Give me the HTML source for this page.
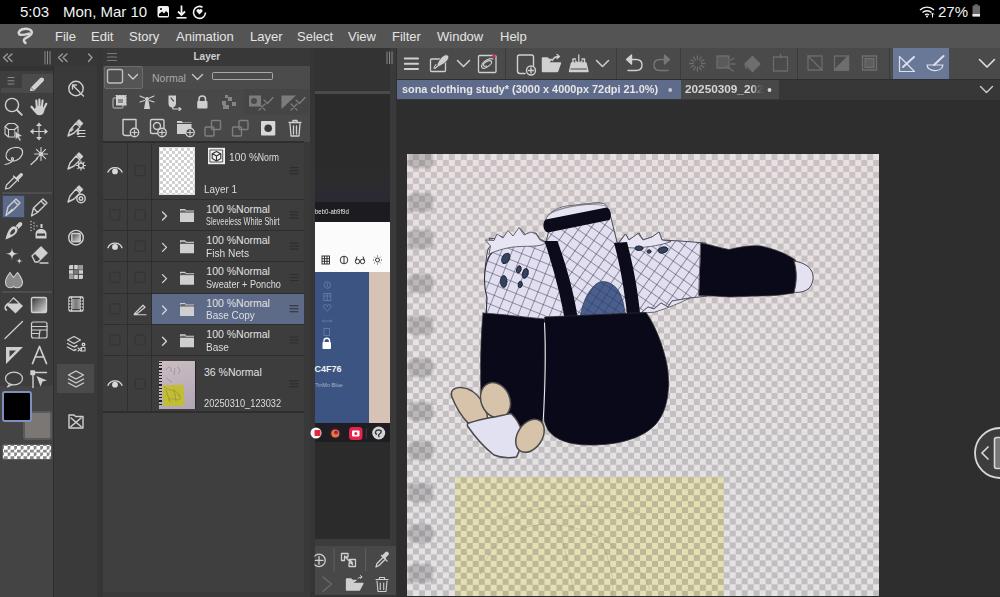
<!DOCTYPE html>
<html><head><meta charset="utf-8">
<style>
*{margin:0;padding:0;box-sizing:border-box}
html,body{width:1000px;height:597px;overflow:hidden;background:#2e2e2e;font-family:"Liberation Sans",sans-serif}
.a{position:absolute}
svg{position:absolute;overflow:visible}
.ic{fill:none;stroke:#cfcfcf;stroke-width:1.4;stroke-linecap:round;stroke-linejoin:round}
.icf{fill:#cfcfcf;stroke:none}
#status{left:0;top:0;width:1000px;height:24px;background:#000;color:#f2f2f2;font-size:15px}
#menu{left:0;top:24px;width:1000px;height:24px;background:#545454;color:#e4e4e4;font-size:13px}
#menu span{position:absolute;top:4.5px}
#tools{left:0;top:48px;width:54px;height:549px;background:#3d3d3d}
#sub{left:54px;top:48px;width:43px;height:549px;background:#3a3a3a}
#strip1{left:97px;top:48px;width:6px;height:549px;background:#353535}
#layer{left:103px;top:48px;width:207px;height:549px;background:#424242}
#mid{left:310px;top:48px;width:87px;height:549px;background:#363636}
#canvasarea{left:397px;top:48px;width:603px;height:549px;background:#2e2e2e}
#ctool{left:397px;top:48px;width:603px;height:32px;background:#474747}
#tabs{left:397px;top:80px;width:603px;height:20px;background:#383838}
#canvas{left:407px;top:154px;width:471px;height:443px;overflow:hidden;
 background-color:#e6dfdf;
 background-image:conic-gradient(#c9c2c2 0 25%,transparent 0 50%,#c9c2c2 0 75%,transparent 0);
 background-size:12px 12px}
.lt{color:#dedede;font-size:12px;position:absolute;white-space:nowrap;letter-spacing:-0.2px}
</style></head><body>
<!-- STATUS -->
<div id="status" class="a">
 <span class="a" style="left:20px;top:3px">5:03</span>
 <span class="a" style="left:63px;top:3px">Mon, Mar 10</span>
 <span class="a" style="left:938px;top:3px">27%</span>

 <svg style="left:0;top:0" width="1000" height="24">
  <rect x="157.5" y="6" width="11.5" height="11.5" rx="1.8" fill="#f2f2f2"/>
  <path d="M159 16 L159 14 L162 11.5 L164 13.5 L166 11 L168 13 L168 16 Z" fill="#000"/>
  <circle cx="161" cy="9" r="1" fill="#000"/>
  <path d="M181.5 5.5 V14.5 M178 11.5 L181.5 15 L185 11.5" stroke="#f2f2f2" stroke-width="1.8" fill="none"/>
  <rect x="176.5" y="17" width="10" height="1.6" fill="#f2f2f2"/>
  <path d="M202.5 7.2 A6 6 0 1 0 205.5 12.5" stroke="#f2f2f2" stroke-width="1.6" fill="none"/>
  <path d="M199.5 14.5 L196.8 11.8 A1.5 1.5 0 0 1 199.5 9.8 A1.5 1.5 0 0 1 202.2 11.8 Z" fill="#f2f2f2"/>
  <path d="M920 10 A10 10 0 0 1 934 10 M922.5 12.5 A6.5 6.5 0 0 1 931.5 12.5 M925 15 A3 3 0 0 1 929 15" stroke="#f2f2f2" stroke-width="1.4" fill="none"/>
  <circle cx="927" cy="16.5" r="1" fill="#f2f2f2"/>
  <path d="M932.5 17.5 V13 M931 14.5 L932.5 13 L934 14.5" stroke="#f2f2f2" stroke-width="1" fill="none"/>
  <rect x="972.5" y="5.5" width="7.5" height="11" rx="1" fill="#6a6a6a"/>
  <rect x="974.5" y="4.3" width="3.5" height="1.5" fill="#6a6a6a"/>
  <rect x="972.5" y="14" width="7.5" height="2.5" fill="#e8e8e8"/>
 </svg>
</div>
<!-- MENU -->
<div id="menu" class="a">
<svg style="left:0;top:0" width="60" height="24"><path d="M29 9.6 C25.5 10.6 21 11.6 19.2 10.2 C17.8 8.8 19.5 6.2 22.5 5.3 C26.5 4.2 31.5 5 31.8 8.3 C32 11 28.5 12.6 25.5 14.2 C23.5 15.3 23.2 17 25.5 19" stroke="#d6d6d6" stroke-width="2.5" fill="none" stroke-linecap="round" stroke-linejoin="round"/></svg>
<span style="left:55px">File</span><span style="left:91px">Edit</span><span style="left:129px">Story</span><span style="left:176px">Animation</span><span style="left:250px">Layer</span><span style="left:297px">Select</span><span style="left:348px">View</span><span style="left:392px">Filter</span><span style="left:437px">Window</span><span style="left:500px">Help</span>
</div>
<div id="tools" class="a"></div>
<div class="a" style="left:0;top:48px;width:54px;height:18px;background:#373737"></div>
<div class="a" style="left:0;top:66px;width:54px;height:6px;background:#333"></div>
<div class="a" style="left:1px;top:71px;width:52px;height:120px;background:#3e3e3e"></div>
<div class="a" style="left:22px;top:74px;width:31px;height:15px;background:#4b4b4b"></div>
<div class="a" style="left:1px;top:88px;width:52px;height:5px;background:#4a4a4a"></div>
<div class="a" style="left:2px;top:192px;width:50px;height:1.5px;background:#4e4e4e"></div>
<div class="a" style="left:2px;top:291px;width:50px;height:1.5px;background:#4e4e4e"></div>
<div class="a" style="left:2px;top:195px;width:23px;height:23px;background:#5c6a8a;border:1px solid #3a4660"></div>
<div class="a" style="left:0;top:386px;width:54px;height:211px;background:#444"></div>
<div class="a" style="left:53px;top:66px;width:1px;height:531px;background:#2e2e2e"></div>
<!-- color swatches -->
<div class="a" style="left:23px;top:411px;width:29px;height:29px;background:#7a7774;border:2px solid #5a5a5a;border-radius:3px"></div>
<div class="a" style="left:1.5px;top:391px;width:30px;height:31px;background:#000;border:2px solid #7f8fc0;border-radius:3px"></div>
<div class="a" style="left:2px;top:444px;width:50px;height:16px;border-radius:3px;border:1.5px solid #5a5a5a;background-color:#fff;background-image:conic-gradient(#888 0 25%,transparent 0 50%,#888 0 75%,transparent 0);background-size:6.5px 6.5px;background-position:1px 1px"></div>
<svg style="left:0;top:0" width="54" height="597">
 <g class="ic">
  <path d="M3.5 57.5 L7.5 54 M3.5 57.5 L7.5 61.5 M8 57.5 L12 54 M8 57.5 L12 61.5" stroke="#9a9a9a"/>
  <path d="M45 51.5 V64 M47.5 51.5 V64 M50 51.5 V64" stroke="#8a8a8a" stroke-width="1"/>
  <path d="M8 77.5 H14 M8 80.8 H14 M8 84 H14" stroke="#8a8a8a" stroke-width="1"/>
  <path d="M29.8 91 L30.8 87.5 L40 78.3 C41 77.3 42.7 77.3 43.5 78.3 C44.3 79.2 44.2 80.6 43.2 81.6 L34 90.8 Z" fill="#d0d0d0" stroke="none"/><path d="M31 87.5 L33.5 90" stroke="#4b4b4b" stroke-width="0.7"/>
  <!-- row1 magnifier -->
  <circle cx="12" cy="105" r="6.6"/><path d="M17 110 L21.8 114.8" stroke-width="1.8"/>
  <!-- hand -->
  <g stroke="#cfcfcf" stroke-linecap="round"><path d="M37 109 L36.3 100.5 M39.4 108.5 V99.5 M41.6 109 L42.6 100.5 M43.2 110 L46.3 103.8" stroke-width="2.1"/><path d="M35.5 111.5 L31.5 106.8" stroke-width="2.3"/></g><ellipse cx="39.5" cy="110.5" rx="4.8" ry="4.8" fill="#cfcfcf" stroke="none"/>
  <!-- cube cursor -->
  <path d="M5 126.5 L8.5 123.5 H14.5 L18 126.5 V134 L14.5 137 H8.5 L5 134 Z M5 126.5 L8.5 129.5 H14.5 L18 126.5 M8.5 129.5 V137 M14.5 129.5 V137" stroke-width="1.1"/>
  <path d="M15 131 L22.5 136 L19.3 136.8 L21.3 140.3 L19.6 141.2 L17.6 137.7 L15.5 139.8 Z" fill="#cfcfcf" stroke="#3e3e3e" stroke-width="0.6"/>
  <!-- move -->
  <path d="M39 125 V138.5 M32.5 131.5 H45.5" stroke-width="1.1"/><path d="M39 122.5 L42 126 H36 Z M39 140.5 L42 137 H36 Z M30 131.5 L33.5 128.5 V134.5 Z M48 131.5 L44.5 128.5 V134.5 Z" fill="#cfcfcf" stroke="none"/>
  <!-- lasso -->
  <path d="M11 161 C5 160 5 154 8 150.5 C11 147 18 146.5 21.5 149 C24 152 22 158 16 160.5 C14 161.5 12 160.5 11.5 159 C11 157.5 13.5 157 13.5 159 C13.5 161.5 9 164 5 164.5" stroke-width="1.2"/>
  <!-- magic wand -->
  <path d="M31 164.5 L37.5 158.5" stroke-width="1.2"/>
  <path d="M41 147.5 V160.5 M34.5 154 H47.5 M36.4 149.4 L45.6 158.6 M45.6 149.4 L36.4 158.6" stroke-width="1.1"/><circle cx="41" cy="154" r="2" fill="#cfcfcf" stroke="none"/>
  <!-- eyedropper -->
  <path d="M5.5 189 L6.5 185 L14.5 177 L17.5 180 L9.5 188 Z" stroke-width="1.2"/><path d="M13.5 176 L18.5 181 M16.3 178.3 L20.5 174 C21.5 173 23 174.5 22 175.5 L17.8 179.8" fill="#cfcfcf" stroke-width="1.3"/>
  <!-- pen selected -->
  <path d="M6 215.5 L8 207 L16 199 L20 203 L12 211 Z M8.5 213 L12 209.5 M14 201 L18 205"/>
  <!-- pencil -->
  <path d="M31.5 216 L33.5 208 L43 199 L47 203 L37.5 212.5 Z M33.5 208 L37.5 212.5 M41 201 L45 205" fill="none"/>
  <!-- brush -->
  <path d="M5.5 239.5 C6.5 235 8 230 11.5 227 C13.5 225.5 16.5 226.5 17.5 228.5 C18 231 16.5 234 13 236 C10.5 237.5 8 238.5 5.5 239.5Z" fill="#cfcfcf" stroke="none"/>
  <path d="M10 234 C10.5 231.5 12 229.5 14 229 C15.5 229.5 15.5 231.5 14 233 C12.5 234.5 11 235 10 234Z" fill="#3e3e3e" stroke="none"/>
  <path d="M16.5 226 L19.5 223 C20.5 222 22.5 223.5 21.5 225 L18.5 228" fill="#cfcfcf" stroke="#cfcfcf" stroke-width="1.2"/>
  <!-- airbrush -->
  <path d="M35.5 238.5 H46.5 V234 C46.5 230.5 44 229 41 229 C38 229 35.5 230.5 35.5 234 Z" fill="#cfcfcf" stroke="none"/>
  <rect x="37" y="233.5" width="8" height="2.3" fill="#3e3e3e" stroke="none"/>
  <rect x="40.5" y="224" width="2" height="4" fill="#cfcfcf" stroke="none"/>
  <g fill="#cfcfcf" stroke="none"><circle cx="31" cy="221.5" r="0.7"/><circle cx="31" cy="224.5" r="0.7"/><circle cx="31" cy="227.5" r="0.7"/><circle cx="31" cy="230.5" r="0.7"/><circle cx="34" cy="223" r="0.7"/><circle cx="34" cy="226" r="0.7"/><circle cx="34" cy="229" r="0.7"/><circle cx="37" cy="226" r="0.7"/></g>
  <!-- sparkle -->
  <path d="M12 247.5 C12.4 252 13 253.2 18.5 253.8 C13 254.4 12.4 255.6 12 260.5 C11.6 255.6 11 254.4 5.5 253.8 C11 253.2 11.6 252 12 247.5Z" fill="#d6d6d6" stroke="none"/>
  <path d="M19.3 257.5 C19.5 260 19.8 260.6 22.8 261 C19.8 261.4 19.5 262 19.3 264.5 C19.1 262 18.8 261.4 15.8 261 C18.8 260.6 19.1 260 19.3 257.5Z" fill="#d6d6d6" stroke="none"/>
  <!-- eraser -->
  <path d="M32 256 L41 247 L47 253 L38 262 L35 262 Z" />
  <path d="M34.5 253.5 L41 247 L47 253 L40.5 259.5Z" fill="#cfcfcf" stroke="none"/>
  <path d="M40 263 H48" />
  <!-- blend -->
  <path d="M5.5 282 C5.5 278.5 7.5 276 10 272.5 L13.5 277.5 L17.5 272.5 C20 276 22.5 279 22.5 282.5 C22.5 285.5 20 287.8 17 287.8 C15.5 287.8 14.3 287.2 13.5 286.3 C12.7 287.2 11.3 287.8 10 287.8 C7.5 287.8 5.5 285.5 5.5 282Z" fill="#8a8a8a" stroke="#cfcfcf" stroke-width="1.1"/>
  <!-- fill -->
  <path d="M13.5 297 L23 306 L15.5 313.5 L6.5 305 Z" fill="#cfcfcf" stroke="none"/>
  <path d="M13.5 298.8 L18.5 303.5 H8.8 Z" fill="#3e3e3e" stroke="none"/>
  <path d="M8 303.5 L6 305.5 C4.8 307 5 309.5 6.5 310" stroke-width="1.6"/>
  <!-- gradient -->
  <rect x="31.5" y="297.5" width="15" height="15" rx="1.5" fill="url(#grd)" stroke="#cfcfcf"/>
  <!-- line -->
  <path d="M5 338.5 L22.5 321.5" stroke-width="1.2"/>
  <!-- frame -->
  <rect x="31.5" y="322" width="15.5" height="16" rx="2" stroke-width="1.2"/><path d="M31.5 326.5 H47 M31.5 330 H47 M31.5 333.5 H38.5 M40 330 L39 338" stroke-width="1.2"/>
  <!-- ruler -->
  <path d="M6 347 H23 L6 364 Z" fill="#cfcfcf" stroke="none"/><path d="M9.5 350.5 H16 L9.5 357 Z" fill="#3e3e3e" stroke="none"/>
  <!-- A -->
  <path d="M32.5 363.5 L39.5 346.5 L46.5 363.5 M35 357 H44" stroke-width="1.7"/>
  <!-- balloon -->
  <ellipse cx="14" cy="378.5" rx="8.5" ry="6.3" stroke-width="1.2"/><path d="M9.5 384 L7.5 387 L12.5 384.5" stroke-width="1.2"/>
  <!-- correction line -->
  <path d="M33 372 V387.5 M33 372.5 H46.5" stroke-width="1.4"/><rect x="31" y="371" width="3.5" height="3.5" fill="#cfcfcf"/>
  <path d="M36.5 376 L47 380.5 L42.5 381.5 L40.5 386.5 Z" fill="#cfcfcf" stroke="none"/>
 </g>
 <defs><linearGradient id="grd" x1="0" y1="0" x2="1" y2="1"><stop offset="0" stop-color="#333"/><stop offset="1" stop-color="#ddd"/></linearGradient></defs>
</svg>
<div id="sub" class="a"></div>
<div class="a" style="left:54px;top:48px;width:43px;height:18px;background:#373737"></div>
<div class="a" style="left:57px;top:364px;width:37px;height:29px;background:#4a4a4a"></div>
<svg style="left:0;top:0" width="110" height="597">
 <g class="ic">
  <path d="M58.5 57.5 L62.5 54 M58.5 57.5 L62.5 61.5 M63 57.5 L67 54 M63 57.5 L67 61.5" stroke="#9a9a9a"/>
  <path d="M88.5 54 L92 57.5 L88.5 61.5" stroke="#9a9a9a"/>
  <!-- circle arrow -->
  <circle cx="76" cy="88.5" r="7.2"/><path d="M72.5 85 L79.5 92 M72.5 85 H76.5 M72.5 85 V89 M80 93 L83.5 96"/>
  <!-- pen lines -->
  <path d="M68 136 L70 130 L76 123 L80 127 L74 133 Z M71 131 L73 129" /><path d="M77 122 L79 120 L82.5 123.5 L80.5 125.5Z" fill="#cfcfcf"/>
  <path d="M78 130.5 H85 M78 133.5 H85 M78 136.5 H85" stroke-width="1.2"/><circle cx="78" cy="130.5" r="0.8" fill="#cfcfcf"/><circle cx="78" cy="133.5" r="0.8" fill="#cfcfcf"/>
  <!-- pen gear -->
  <path d="M68 169 L70 163 L76 156 L80 160 L74 166 Z" /><path d="M77 155 L79 153 L82.5 156.5 L80.5 158.5Z" fill="#cfcfcf"/>
  <circle cx="81" cy="165.5" r="2.5"/><path d="M81 161 V162.5 M81 168.5 V170 M76.5 165.5 H78 M84 165.5 H85.5 M77.8 162.3 L78.9 163.4 M83.1 167.6 L84.2 168.7 M84.2 162.3 L83.1 163.4 M78.9 167.6 L77.8 168.7" stroke-width="1.2"/>
  <!-- pen target -->
  <path d="M68 202 L70 196 L76 189 L80 193 L74 199 Z" /><path d="M77 188 L79 186 L82.5 189.5 L80.5 191.5Z" fill="#cfcfcf"/>
  <circle cx="81" cy="198.5" r="4.2"/><circle cx="81" cy="198.5" r="1.8"/>
  <!-- circle square -->
  <circle cx="76" cy="237.7" r="7.3"/><rect x="71.8" y="233.5" width="8.4" height="8.4" rx="1" fill="url(#grd2)"/>
  <!-- grid -->
  <rect x="69" y="265" width="14" height="14" rx="1.5" fill="#cfcfcf" stroke="none"/>
  <path d="M69 269.7 H83 M69 274.3 H83 M73.7 265 V279 M78.3 265 V279" stroke="#3a3a3a" stroke-width="1"/>
  <rect x="73.7" y="269.7" width="4.6" height="4.6" fill="#777" stroke="none"/><rect x="78.3" y="265" width="4.6" height="4.6" fill="#999" stroke="none"/><rect x="69" y="274.3" width="4.6" height="4.6" fill="#999" stroke="none"/>
  <!-- film -->
  <rect x="69" y="297" width="14" height="14" rx="1"/><path d="M71.5 297 V311 M80.5 297 V311" /><rect x="71.5" y="299" width="9" height="10" fill="url(#grd3)" stroke="none"/>
  <path d="M69.5 299.5 h1.5 M69.5 302.5 h1.5 M69.5 305.5 h1.5 M69.5 308.5 h1.5 M81 299.5 h1.5 M81 302.5 h1.5 M81 305.5 h1.5 M81 308.5 h1.5" stroke-width="1" stroke="#3a3a3a"/>
  <!-- layers x -->
  <path d="M67.5 340 L74 336.5 L80.5 340 L74 343.5 Z M67.5 343.5 L74 347 L77 345.5 M67.5 347 L74 350.5 L76 349.5" />
  <path d="M78 348 L81 351 M81 348 L78 351" stroke-width="1.1"/><circle cx="83.5" cy="344.5" r="1.3"/><rect x="81.5" y="347.5" width="3.5" height="3.5" stroke-width="1.1"/>
  <!-- layers selected -->
  <path d="M68.5 375 L76 371 L83.5 375 L76 379 Z M68.5 379 L76 383 L83.5 379 M68.5 383 L76 387 L83.5 383" />
  <!-- folder x -->
  <path d="M69 415 H74 L75.5 416.5 H83 V428 H69 Z" /><path d="M71 418 L81 426.5 M81 418 L71 426.5" stroke-width="1.6"/>
 </g>
 <defs>
  <linearGradient id="grd2" x1="0" y1="0" x2="1" y2="1"><stop offset="0" stop-color="#444"/><stop offset="1" stop-color="#ddd"/></linearGradient>
  <linearGradient id="grd3" x1="0" y1="0" x2="1" y2="0"><stop offset="0" stop-color="#aaa"/><stop offset="0.5" stop-color="#777"/><stop offset="1" stop-color="#aaa"/></linearGradient>
 </defs>
</svg>
<div id="strip1" class="a"></div>
<div class="a" style="left:103px;top:48px;width:207px;height:549px;background:#3a3a3a"></div>
<div class="a" style="left:103px;top:48px;width:207px;height:18px;background:#383838"></div>
<div class="a" style="left:103px;top:66px;width:207px;height:76px;background:#484848"></div>
<div class="a" style="left:143px;top:66px;width:167px;height:23px;background:#4b4b4b"></div>
<div class="a" style="left:244px;top:89px;width:65px;height:26px;background:#454545"></div>
<div class="a" style="left:104px;top:66px;width:39px;height:23px;background:#555;border:1.5px solid #6c6c6c;border-radius:2px"></div>
<div class="a" style="left:103px;top:142px;width:200.5px;height:271px;background:#3d3d3d"></div>
<div class="a" style="left:103px;top:413px;width:200.5px;height:179px;background:#3f3f3f"></div>
<div class="a" style="left:303.5px;top:142px;width:6.5px;height:450px;background:#393939"></div>
<div class="a" style="left:152px;top:293.5px;width:152px;height:30.5px;background:#5d6a88"></div>
<div class="a" style="left:103px;top:141.4px;width:200.5px;height:1.3px;background:#2e2e2e"></div>
<div class="a" style="left:103px;top:198.6px;width:200.5px;height:1.3px;background:#2e2e2e"></div>
<div class="a" style="left:103px;top:229.9px;width:200.5px;height:1.3px;background:#2e2e2e"></div>
<div class="a" style="left:103px;top:261.2px;width:200.5px;height:1.3px;background:#2e2e2e"></div>
<div class="a" style="left:103px;top:292.5px;width:200.5px;height:1.3px;background:#2e2e2e"></div>
<div class="a" style="left:103px;top:323.8px;width:200.5px;height:1.3px;background:#2e2e2e"></div>
<div class="a" style="left:103px;top:355.1px;width:200.5px;height:1.3px;background:#2e2e2e"></div>
<div class="a" style="left:103px;top:411.4px;width:200.5px;height:1.3px;background:#2e2e2e"></div>
<div class="a" style="left:127px;top:142px;width:1.2px;height:271px;background:#2f2f2f"></div>
<div class="a" style="left:151px;top:142px;width:1.2px;height:271px;background:#2e2e2e"></div>
<div class="a" style="left:193.5px;top:52.03px;font-size:10px;line-height:10px;color:#cfcfcf;white-space:nowrap;font-weight:bold;">Layer</div>

<div class="a" style="left:152px;top:72.61px;font-size:10.5px;line-height:10.5px;color:#a9a9a9;white-space:nowrap;font-weight:normal;">Normal</div>

<div class="a" style="left:212px;top:71.5px;width:61px;height:8.5px;border:1.3px solid #a8a8a8;border-radius:1.5px"></div>
<div class="a" style="left:159px;top:147px;width:36px;height:48px;background-color:#fff;background-image:conic-gradient(#d0d0d0 0 25%,transparent 0 50%,#d0d0d0 0 75%,transparent 0);background-size:6px 6px;border:1px solid #ddd"></div>
<div class="a" style="left:158.5px;top:360.5px;width:37px;height:48.5px;background:#262626"></div>
<div class="a" style="left:159px;top:361px;width:36px;height:47.5px;background:linear-gradient(165deg,#cbbcc2,#bdb0ba 55%,#b0a6b8)"></div>
<div class="a" style="left:162.5px;top:384.5px;width:21px;height:21px;background:#c2be34;transform:rotate(-2deg)"></div>
<div class="a" style="left:159px;top:362px;width:3px;height:45px;background:repeating-linear-gradient(#1e1e1e 0 1.3px,transparent 1.3px 3.2px)"></div>
<svg style="left:0;top:0" width="200" height="420"><g fill="none" stroke="#8a8088" stroke-width="0.6"><path d="M166 370 C168 366 172 366 171 372 M175 368 L174 375 M177 367 C180 368 181 372 178 374 M167 378 C169 381 172 381 171 383 M164 387 C170 392 175 388 180 396 M168 400 C172 396 176 402 180 399"/></g><g fill="none" stroke="#9a9420" stroke-width="0.8"><path d="M166 390 L170 402 M174 389 L176 401 M178 394 L181 399"/></g></svg>
<div class="a" style="left:229px;top:152.49px;font-size:11px;line-height:11px;color:#dcdcdc;white-space:nowrap;font-weight:normal;transform:scaleX(0.93);transform-origin:0 0;">100 %<span style="display:inline-block;transform:scaleX(0.85);transform-origin:0 0">Norm</span></div>

<div class="a" style="left:204px;top:184.16px;font-size:10.8px;line-height:10.8px;color:#dedede;white-space:nowrap;font-weight:normal;transform:scaleX(0.92);transform-origin:0 0;">Layer 1</div>

<div class="a" style="left:206.3px;top:203.71px;font-size:10.5px;line-height:10.5px;color:#e2e2e2;white-space:nowrap;font-weight:normal;">100 %Normal</div>

<div class="a" style="left:206px;top:216.31px;font-size:10.5px;line-height:10.5px;color:#dedede;white-space:nowrap;font-weight:normal;transform:scaleX(0.7);transform-origin:0 0;">Sleveeless White Shirt</div>

<div class="a" style="left:206.3px;top:235.01px;font-size:10.5px;line-height:10.5px;color:#e2e2e2;white-space:nowrap;font-weight:normal;">100 %Normal</div>

<div class="a" style="left:206px;top:247.61px;font-size:10.5px;line-height:10.5px;color:#dedede;white-space:nowrap;font-weight:normal;transform:scaleX(0.97);transform-origin:0 0;">Fish Nets</div>

<div class="a" style="left:206.3px;top:266.31px;font-size:10.5px;line-height:10.5px;color:#e2e2e2;white-space:nowrap;font-weight:normal;">100 %Normal</div>

<div class="a" style="left:206px;top:278.91px;font-size:10.5px;line-height:10.5px;color:#dedede;white-space:nowrap;font-weight:normal;transform:scaleX(0.87);transform-origin:0 0;">Sweater + Poncho</div>

<div class="a" style="left:206.3px;top:297.61px;font-size:10.5px;line-height:10.5px;color:#e2e2e2;white-space:nowrap;font-weight:normal;">100 %Normal</div>

<div class="a" style="left:206px;top:310.21px;font-size:10.5px;line-height:10.5px;color:#dedede;white-space:nowrap;font-weight:normal;transform:scaleX(0.95);transform-origin:0 0;">Base Copy</div>

<div class="a" style="left:206.3px;top:328.91px;font-size:10.5px;line-height:10.5px;color:#e2e2e2;white-space:nowrap;font-weight:normal;">100 %Normal</div>

<div class="a" style="left:206px;top:341.51px;font-size:10.5px;line-height:10.5px;color:#dedede;white-space:nowrap;font-weight:normal;transform:scaleX(0.96);transform-origin:0 0;">Base</div>

<div class="a" style="left:204px;top:366.91px;font-size:10.5px;line-height:10.5px;color:#e2e2e2;white-space:nowrap;font-weight:normal;">36 %Normal</div>

<div class="a" style="left:204px;top:398.11px;font-size:10.5px;line-height:10.5px;color:#dedede;white-space:nowrap;font-weight:normal;transform:scaleX(0.88);transform-origin:0 0;">20250310_123032</div>

<svg style="left:0;top:0" width="320" height="597"><g class="ic">
<path d="M107.5 53.5 H116.5 M107.5 57 H116.5 M107.5 60.5 H116.5" stroke="#7a7a7a" stroke-width="1.1"/>
<rect x="107.5" y="69.5" width="15" height="13.5" rx="2" stroke="#bdbdbd" stroke-width="1.4" fill="#4e4e4e"/>
<path d="M128.5 74.5 L133 79 L137.5 74.5" stroke="#cfcfcf" stroke-width="1.3"/>
<path d="M192.5 74.5 L197.5 79.5 L202.5 74.5" stroke="#c8c8c8" stroke-width="1.3"/>
<rect x="113" y="98" width="10" height="10" rx="1.5" stroke="#9a9a9a"/><rect x="116" y="95.5" width="10" height="10" fill="#cfcfcf" stroke="none"/><path d="M116 95.5 h10 v10" stroke="#cfcfcf" stroke-dasharray="1.5 1.5" stroke-width="1.2"/><rect x="118" y="99" width="5" height="4" fill="#888" stroke="none"/>
<path d="M144 109 L145.5 100.5 H148.5 L150 109 Z" fill="#cfcfcf" stroke="none"/><circle cx="147" cy="99" r="2" fill="#cfcfcf" stroke="none"/><path d="M140 96 L144.5 98 M154 96 L149.5 98 M140 102 L144.5 100.5 M154 102 L149.5 100.5" stroke-width="1.1"/>
<path d="M168.5 95.5 H176 V103.5 C176 106 174 107.5 172 107.5 C170 107.5 168.5 106 168.5 103.5 Z" fill="#cfcfcf" stroke="none"/><path d="M171 98 L173.5 101" stroke="#555" stroke-width="1.2"/><path d="M172.5 107 L173 109 H181 M179 107.5 L181 109 L179 110.5" stroke-width="1.1"/>
<path d="M199 101.5 V99 C199 95 205.5 95 205.5 99 V101.5" stroke-width="1.5"/><rect x="197.2" y="101" width="10.3" height="7.5" rx="1" fill="#cfcfcf" stroke="none"/>
<g opacity="0.45"><rect x="222" y="101" width="4" height="4" fill="#cfcfcf" stroke="none"/><rect x="228" y="97" width="4" height="4" fill="#cfcfcf" stroke="none"/><rect x="232" y="102" width="4" height="4" fill="#cfcfcf" stroke="none"/><rect x="223" y="105" width="6" height="4" fill="#cfcfcf" stroke="none"/><rect x="225" y="95" width="3" height="3" fill="#cfcfcf" stroke="none"/></g>
<g opacity="0.4"><rect x="249" y="95.5" width="12" height="11" fill="#cfcfcf" stroke="none"/><circle cx="254" cy="101" r="3" fill="#555" stroke="none"/><path d="M259 104 L265 110 M265 104 L259 110 M264 100 L267.5 103.5 L273 97.5" stroke-width="1.3"/></g>
<g opacity="0.4"><path d="M281.5 95.5 H296 L281.5 109 Z" fill="#cfcfcf" stroke="none"/><path d="M291 104 L297 110 M297 104 L291 110 M296 100 L299.5 103.5 L305 97.5" stroke-width="1.3"/></g>
<path d="M123 119.5 H136 V129 M123 119.5 V133.5 C123 135 124.5 135.5 126 135.5 H130" stroke-width="1.4"/><circle cx="134.5" cy="132.5" r="4.2" fill="#484848"/><path d="M134.5 130 V135 M132 132.5 H137" stroke-width="1.2"/>
<rect x="150.5" y="119.5" width="13.5" height="14" rx="1.5"/><circle cx="157" cy="126" r="3.5"/><circle cx="162" cy="132.5" r="4.2" fill="#484848"/><path d="M162 130 V135 M159.5 132.5 H164.5" stroke-width="1.2"/>
<path d="M177 121 H181.5 L183 122.5 H191.5 V134 H177 Z" fill="#cfcfcf" stroke="none"/><path d="M177 123.5 H191.5" stroke="#484848" stroke-width="1"/><circle cx="190" cy="132.5" r="4.2" fill="#484848"/><path d="M190 130 V135 M187.5 132.5 H192.5" stroke-width="1.2"/>
<g opacity="0.4"><rect x="211.5" y="120.5" width="9" height="9" rx="1"/><rect x="205" y="127" width="9" height="9" rx="1"/></g>
<g opacity="0.4"><rect x="239" y="120.5" width="9" height="9" rx="1"/><rect x="232.5" y="127" width="9" height="9" rx="1"/></g>
<rect x="261" y="121" width="14.3" height="14.5" rx="1" fill="#d8d8d8" stroke="none"/><circle cx="268.2" cy="128.2" r="3.8" fill="#3a3a3a" stroke="none"/>
<path d="M289 122.5 H301 M293 122.5 V120.5 H297 V122.5 M290 124 L291 136 H299 L300 124 M293.5 126 V134 M296.5 126 V134" stroke-width="1.3"/>
<path d="M108 172.1 C110.5 166.1 119.5 166.1 122 172.1" stroke="#d8d8d8" stroke-width="1.4" fill="none"/><circle cx="115" cy="171.4" r="2.9" fill="#d8d8d8" stroke="none"/>
<rect x="135" y="165.6" width="10" height="10" rx="1.5" stroke="#353535" stroke-width="1.3"/>
<path d="M290 167.6 H298 M290 170.6 H298 M290 173.6 H298" stroke="#2e2e2e" stroke-width="1.1"/>
<rect x="110" y="209.85" width="10" height="10" rx="1.5" stroke="#353535" stroke-width="1.3"/>
<rect x="135" y="209.85" width="10" height="10" rx="1.5" stroke="#353535" stroke-width="1.3"/>
<path d="M290 211.85 H298 M290 214.85 H298 M290 217.85 H298" stroke="#2e2e2e" stroke-width="1.1"/>
<path d="M162.5 212.04999999999998 L166.5 216.04999999999998 L162.5 220.04999999999998" stroke="#d8d8d8" stroke-width="1.3"/>
<path d="M180 209.04999999999998 H185 L186.5 210.54999999999998 H194 V222.04999999999998 H180 Z" fill="#cfcfcf" stroke="none"/><path d="M181 211.04999999999998 H185" stroke="#555" stroke-width="1.2"/><path d="M180 212.04999999999998 H194" stroke="#3d3d3d" stroke-width="0.9"/>
<path d="M108 247.65 C110.5 241.65 119.5 241.65 122 247.65" stroke="#d8d8d8" stroke-width="1.4" fill="none"/><circle cx="115" cy="246.95000000000002" r="2.9" fill="#d8d8d8" stroke="none"/>
<rect x="135" y="241.15" width="10" height="10" rx="1.5" stroke="#353535" stroke-width="1.3"/>
<path d="M290 243.15 H298 M290 246.15 H298 M290 249.15 H298" stroke="#2e2e2e" stroke-width="1.1"/>
<path d="M162.5 243.35 L166.5 247.35 L162.5 251.35" stroke="#d8d8d8" stroke-width="1.3"/>
<path d="M180 240.35 H185 L186.5 241.85 H194 V253.35 H180 Z" fill="#cfcfcf" stroke="none"/><path d="M181 242.35 H185" stroke="#555" stroke-width="1.2"/><path d="M180 243.35 H194" stroke="#3d3d3d" stroke-width="0.9"/>
<rect x="110" y="272.45000000000005" width="10" height="10" rx="1.5" stroke="#353535" stroke-width="1.3"/>
<rect x="135" y="272.45000000000005" width="10" height="10" rx="1.5" stroke="#353535" stroke-width="1.3"/>
<path d="M290 274.45000000000005 H298 M290 277.45000000000005 H298 M290 280.45000000000005 H298" stroke="#2e2e2e" stroke-width="1.1"/>
<path d="M162.5 274.65000000000003 L166.5 278.65000000000003 L162.5 282.65000000000003" stroke="#d8d8d8" stroke-width="1.3"/>
<path d="M180 271.65000000000003 H185 L186.5 273.15000000000003 H194 V284.65000000000003 H180 Z" fill="#cfcfcf" stroke="none"/><path d="M181 273.65000000000003 H185" stroke="#555" stroke-width="1.2"/><path d="M180 274.65000000000003 H194" stroke="#3d3d3d" stroke-width="0.9"/>
<rect x="110" y="303.75" width="10" height="10" rx="1.5" stroke="#353535" stroke-width="1.3"/>
<path d="M134.5 313.75 L143 305.25 L145 307.25 L137 313.75 Z M134 314.75 H146" stroke="#d0d0d0" stroke-width="1.2"/>
<path d="M290 305.75 H298 M290 308.75 H298 M290 311.75 H298" stroke="#2e2e2e" stroke-width="1.1"/>
<path d="M162.5 305.95 L166.5 309.95 L162.5 313.95" stroke="#d8d8d8" stroke-width="1.3"/>
<path d="M180 302.95 H185 L186.5 304.45 H194 V315.95 H180 Z" fill="#cfcfcf" stroke="none"/><path d="M181 304.95 H185" stroke="#555" stroke-width="1.2"/><path d="M180 305.95 H194" stroke="#3d3d3d" stroke-width="0.9"/>
<rect x="110" y="335.04999999999995" width="10" height="10" rx="1.5" stroke="#353535" stroke-width="1.3"/>
<rect x="135" y="335.04999999999995" width="10" height="10" rx="1.5" stroke="#353535" stroke-width="1.3"/>
<path d="M290 337.04999999999995 H298 M290 340.04999999999995 H298 M290 343.04999999999995 H298" stroke="#2e2e2e" stroke-width="1.1"/>
<path d="M162.5 337.24999999999994 L166.5 341.24999999999994 L162.5 345.24999999999994" stroke="#d8d8d8" stroke-width="1.3"/>
<path d="M180 334.24999999999994 H185 L186.5 335.74999999999994 H194 V347.24999999999994 H180 Z" fill="#cfcfcf" stroke="none"/><path d="M181 336.24999999999994 H185" stroke="#555" stroke-width="1.2"/><path d="M180 337.24999999999994 H194" stroke="#3d3d3d" stroke-width="0.9"/>
<path d="M108 385.35 C110.5 379.35 119.5 379.35 122 385.35" stroke="#d8d8d8" stroke-width="1.4" fill="none"/><circle cx="115" cy="384.65000000000003" r="2.9" fill="#d8d8d8" stroke="none"/>
<rect x="135" y="378.85" width="10" height="10" rx="1.5" stroke="#353535" stroke-width="1.3"/>
<path d="M290 380.85 H298 M290 383.85 H298 M290 386.85 H298" stroke="#2e2e2e" stroke-width="1.1"/>
<rect x="208" y="147.8" width="17" height="16.4" fill="#f0f0f0" stroke="none"/><rect x="210.3" y="150" width="12.4" height="12" fill="none" stroke="#444" stroke-width="0.9"/><path d="M216.5 151.5 L220.8 153.8 V158.6 L216.5 160.9 L212.2 158.6 V153.8 Z M216.5 156 V160.5 M216.5 156 L213 154 M216.5 156 L220 154" stroke="#333" stroke-width="1.1" fill="none"/>
</g></svg>
<div class="a" style="left:310px;top:48px;width:87px;height:549px;background:#353535;"></div>
<div class="a" style="left:314.5px;top:48px;width:78px;height:43px;background:#333;"></div>
<div class="a" style="left:314.5px;top:91px;width:78px;height:2.5px;background:#4a4a4a;"></div>
<div class="a" style="left:314.5px;top:93.5px;width:76px;height:498px;background:#2b2b2b;"></div>
<div class="a" style="left:389.5px;top:48px;width:7px;height:549px;background:#3a3a3a;"></div>
<div class="a" style="left:396px;top:48px;width:1px;height:549px;background:#303030;"></div>
<div class="a" style="left:309.5px;top:142px;width:5px;height:450px;background:#363636;"></div>
<div class="a" style="left:314.5px;top:170px;width:75.5px;height:20px;background:#2c2c2f;"></div>
<div class="a" style="left:314.5px;top:190px;width:75.5px;height:12px;background:#2a2934;"></div>
<div class="a" style="left:314.5px;top:202px;width:75.5px;height:20px;background:#1c1b20;"></div>
<div class="a" style="left:314.5px;top:222px;width:75.5px;height:50px;background:#fbfbfb;"></div>
<div class="a" style="left:314.5px;top:272px;width:54.5px;height:150.7px;background:#3c5482;"></div>
<div class="a" style="left:369px;top:272px;width:20.5px;height:150.7px;background:#d6c3b6;"></div>
<div class="a" style="left:314.5px;top:422.7px;width:75.5px;height:19px;background:#1e1d22;"></div>
<div class="a" style="left:315px;top:208.37px;font-size:7px;line-height:7px;color:#e8e8e8;white-space:nowrap;font-weight:normal;transform:scaleX(0.86);transform-origin:0 0;">beb0-ab9f9d</div>

<div class="a" style="left:314.6px;top:364.58px;font-size:9px;line-height:9px;color:#f0f0f0;white-space:nowrap;font-weight:bold;">C4F76</div>

<div class="a" style="left:315px;top:382.84px;font-size:5.5px;line-height:5.5px;color:#a8b4cc;white-space:nowrap;font-weight:normal;">?inMn Blue</div>

<div class="a" style="left:314.5px;top:539px;width:75px;height:6.5px;background:#3c3c3c;"></div>
<div class="a" style="left:314.5px;top:545.5px;width:81.5px;height:49.5px;background:#484848;"></div>
<div class="a" style="left:314.5px;top:595px;width:82.5px;height:2px;background:#333;"></div>
<div class="a" style="left:309.5px;top:592px;width:5px;height:5px;background:#333;"></div>
<svg style="left:0;top:0" width="400" height="597">
<path d="M387 51.5 V64 M389.5 51.5 V64 M392 51.5 V64" stroke="#8a8a8a" stroke-width="1"/>
<g fill="none" stroke="#333" stroke-width="1"><rect x="322" y="256" width="7.5" height="8"/><path d="M324.5 256 V264 M327 256 V264 M322 258.7 H329.5 M322 261.3 H329.5"/>
<circle cx="344" cy="260" r="3.8"/><path d="M344 256.5 V263.5"/>
<circle cx="357.5" cy="261.5" r="2.2"/><circle cx="362.5" cy="261.5" r="2.2"/><path d="M355.5 261 L357 256.5 M364.5 261 L363 256.5 M359.7 261.5 H360.3"/>
<circle cx="377.5" cy="260" r="2"/><path d="M377.5 255.5 V256.5 M377.5 263.5 V264.5 M373 260 H374 M381 260 H382 M374.3 256.8 L375 257.5 M380 262.5 L380.7 263.2 M380.7 256.8 L380 257.5 M375 262.5 L374.3 263.2"/></g>
<g fill="none" stroke="#6f84ad" stroke-width="0.9" opacity="0.8"><circle cx="327.3" cy="285" r="3.3"/><path d="M327.3 283 V287"/><rect x="323.8" y="293.5" width="7" height="7"/><path d="M323.8 296 H330.8 M327.3 293.5 V300.5"/><path d="M323.5 306 C323.5 304 327.3 304 327.3 306.5 C327.3 304 331 304 331 306 C331 308 327.3 311 327.3 311 C327.3 311 323.5 308 323.5 306Z"/><path d="M322.5 321 H332 M324 319.5 L322.5 321 L324 322.5 M330.5 319.5 L332 321 L330.5 322.5"/><rect x="324" y="328.5" width="5.5" height="7"/></g>
<path d="M324 342.5 V340.5 C324 337.5 329.5 337.5 329.5 340.5 V342.5" stroke="#fff" stroke-width="1.3" fill="none"/><rect x="322.5" y="342" width="8.5" height="7" rx="0.8" fill="#fff"/>
<circle cx="316" cy="433" r="5.5" fill="#f4f4f4"/><rect x="314.5" y="430" width="6" height="6" rx="1" fill="#e0283c"/>
<circle cx="335.3" cy="433" r="5.8" fill="#3a1a3a"/><circle cx="335.3" cy="433.5" r="4" fill="#f07a2a"/><circle cx="336" cy="432.5" r="2" fill="#8a2a6a"/>
<rect x="349" y="427" width="13.5" height="13" rx="3.5" fill="#e8224c"/><rect x="352" y="430.5" width="7.5" height="6" rx="1" fill="#fff"/><circle cx="355.8" cy="433.5" r="1.5" fill="#e8224c"/>
<path d="M366.3 428 V439" stroke="#444" stroke-width="0.8"/>
<circle cx="378.7" cy="433" r="6.5" fill="#d4d4d4"/><path d="M377 434.5 C374.5 433.5 375 430 378.5 430 C382 430 382 432.5 379.5 434 C378 435 378.5 436.5 379.5 437" stroke="#333" stroke-width="1.3" fill="none"/>
<g fill="none" stroke="#cfcfcf" stroke-width="1.3" stroke-linecap="round" stroke-linejoin="round">
<clipPath id="bp"><rect x="314.5" y="545" width="75" height="50"/></clipPath><g clip-path="url(#bp)"><circle cx="319" cy="560.4" r="6.2"/><path d="M319 556.5 V564.3 M315 560.4 H323"/></g>
<path d="M334 548.5 V571" stroke="#5c5c5c" stroke-width="1.2"/><path d="M365.6 548.5 V571" stroke="#5c5c5c" stroke-width="1.2"/>
<path d="M341.5 553.5 H348 V557 H344.5 V560.5 H341.5 Z M349.5 559.5 H355.5 V566.5 H349 V563 H352.5 Z M344.5 556 L352.5 564.5" stroke-width="1.3"/>
<path d="M376 567 L377 563.5 L383.5 557 L385.5 559 L379 565.5 Z"/><path d="M382.5 556 L386 552.5 C387 551.5 389 553.5 388 554.5 L384.5 558" fill="#cfcfcf"/><path d="M381.5 555.5 L387 561" stroke-width="1.2"/>
<path d="M323 577 L331.5 584 L323 591.5" stroke="#6a6a6a" stroke-width="1.3"/>
<path d="M346.5 590 V579 H351 L352.5 580.5 H356 M346.5 590 L350 583.5 H363 L359.5 590 Z" fill="#cfcfcf"/><path d="M358 578.5 C359 577.5 360.5 577 362 577 M360.5 575.5 L362 577 L360.5 578.5" stroke-width="1"/>
<path d="M376 579.5 H388 M379.5 579.5 V577.5 H384.5 V579.5 M377 581 L378 591.5 H386 L387 581 M380.3 583 V589.5 M383.7 583 V589.5" stroke-width="1.1"/>
</g></svg>
<div id="canvasarea" class="a"></div>
<div class="a" style="left:397px;top:48px;width:603px;height:31px;background:#4a4a4a;"></div>
<div class="a" style="left:397px;top:79px;width:603px;height:1.3px;background:#2e2e2e;"></div>
<div class="a" style="left:397px;top:80px;width:603px;height:20px;background:#373737;"></div>
<div class="a" style="left:397px;top:80.3px;width:284px;height:19.2px;background:#5f6b8a;"></div>
<div class="a" style="left:681px;top:80.3px;width:98px;height:19.2px;background:#484848;"></div>
<div class="a" style="left:504.7px;top:48px;width:1.3px;height:31px;background:#3b3b3b;"></div>
<div class="a" style="left:615.6px;top:48px;width:1.3px;height:31px;background:#3b3b3b;"></div>
<div class="a" style="left:680.1999999999999px;top:48px;width:1.3px;height:31px;background:#3b3b3b;"></div>
<div class="a" style="left:797.1999999999999px;top:48px;width:1.3px;height:31px;background:#3b3b3b;"></div>
<div class="a" style="left:889.1999999999999px;top:48px;width:1.3px;height:31px;background:#3b3b3b;"></div>
<div class="a" style="left:892.7px;top:48px;width:56.3px;height:30.7px;background:#6a7898;"></div>
<div class="a" style="left:401.6px;top:84.49px;font-size:11px;line-height:11px;color:#e6e6e6;white-space:nowrap;font-weight:bold;transform:scaleX(0.99);transform-origin:0 0;">sona clothing study* (3000 x 4000px 72dpi 21.0%)</div>

<div class="a" style="left:685px;top:84.49px;font-size:11px;line-height:11px;color:#d6d6d6;white-space:nowrap;font-weight:bold;transform:scaleX(1.07);transform-origin:0 0;width:78px;overflow:hidden">20250309_202</div>

<div class="a" style="left:752px;top:82px;width:14px;height:16px;background:linear-gradient(90deg,rgba(72,72,72,0) 0%,rgba(72,72,72,0.85) 55%,#484848 100%);"></div>
<svg style="left:0;top:0" width="1000" height="100"><g fill="none" stroke="#d0d0d0" stroke-width="1.4" stroke-linecap="round" stroke-linejoin="round">
<circle cx="670.2" cy="90" r="1.9" fill="#c8c8c8" stroke="none"/><circle cx="769.5" cy="90" r="1.9" fill="#d8d8d8" stroke="none"/>
<path d="M980.5 86.5 L986.5 92.5 L992.5 86.5" stroke="#cfcfcf"/>
<path d="M979.5 59.5 L987 67 L994.5 59.5" stroke="#e0e0e0" stroke-width="1.6"/>
<path d="M404.8 58.6 H418 M404.8 63.8 H418 M404.8 69 H418" stroke-width="2"/>
<rect x="430.5" y="59" width="15" height="12.5" rx="1" stroke-width="1.3"/><path d="M437 65 C438 61 441.5 56.5 444.5 55.2 C447.5 54 449.5 55.8 448.5 58.5 C447.3 61.5 443 64.5 439 66.5 Z" fill="#cfcfcf" stroke="#4a4a4a" stroke-width="0.8"/><path d="M438.5 65.5 L435.5 68 C434.5 69 433.5 68 434.3 67 L436 64.5" stroke-width="1.1"/>
<path d="M457.5 60.5 L463.5 66.5 L469.5 60.5" stroke-width="1.5"/>
<rect x="478.5" y="55.5" width="17.5" height="17" rx="1.2" stroke-width="1.3"/><path d="M486.5 66 C484 67 482.5 65.5 484 63.5 C486 61 490.5 59.5 491.5 61.5 C492.5 63.5 488.5 66.5 485.5 68 C482 69.5 480.5 66.5 482.5 63.5 C485 60 490 58 493 59" stroke-width="1.2"/><circle cx="494" cy="56" r="1.8" fill="#c8305a" stroke="none"/>
<path d="M525 73.5 H520 C518.5 73.5 517.5 72.5 517.5 71 V57 C517.5 55.8 518.3 55 519.5 55 H531.5 C532.5 55 533.5 56 533.5 57 V65.5"/><circle cx="531" cy="70.5" r="4.5" fill="#4a4a4a"/><path d="M531 68 V73 M528.5 70.5 H533.5"/>
<path d="M542.5 71.5 V58 H547.5 L549 59.5 H552 M542.5 71.5 L545.5 63 H560.5 L557.5 71.5 Z" fill="#d0d0d0"/><path d="M552.5 60.5 C553.5 57 556 56.5 559 56.5 M557 54.5 L559.5 56.5 L557 58.5" stroke-width="1.3"/>
<path d="M569.5 71.5 L571.5 63 H586 L588 71.5 Z" fill="#d0d0d0"/><path d="M573 63 V59 M584.5 63 V59 M573 59 H575.5 M582 59 H584.5" /><path d="M578.8 55 V64 M575.5 61 L578.8 64.5 L582 61" stroke-width="1.3"/><path d="M571 69 H586.5" stroke="#4a4a4a" stroke-width="1"/>
<path d="M596.5 60.5 L602.5 66.5 L608.5 60.5" stroke-width="1.5"/>
<path d="M628 59.5 H636 C640 59.5 642 62 642 65 C642 68 640 70.5 636 70.5 H628"/><path d="M631.5 55 L626.5 59.5 L631.5 64 Z" fill="#d0d0d0"/>
<g stroke="#777"><path d="M668 59.5 H660 C656 59.5 654 62 654 65 C654 68 656 70.5 660 70.5 H668"/><path d="M664.5 55 L669.5 59.5 L664.5 64 Z" fill="#777"/></g>
<g stroke="#6e6e6e" stroke-width="1.3">
<path d="M701.4 63.5 L704.9 63.5"/>
<path d="M700.9 65.5 L703.9 67.2"/>
<path d="M699.4 67.0 L701.1 70.0"/>
<path d="M697.4 67.5 L697.4 71.0"/>
<path d="M695.4 67.0 L693.6 70.0"/>
<path d="M693.9 65.5 L690.9 67.2"/>
<path d="M693.4 63.5 L689.9 63.5"/>
<path d="M693.9 61.5 L690.9 59.8"/>
<path d="M695.4 60.0 L693.6 57.0"/>
<path d="M697.4 59.5 L697.4 56.0"/>
<path d="M699.4 60.0 L701.1 57.0"/>
<path d="M700.9 61.5 L703.9 59.8"/>
<rect x="717" y="56" width="12" height="12" stroke-dasharray="1.5 1" fill="#5a5a5a"/><path d="M726 66 L733 71 M731 60 L734 58 M731 64 H735"/>
<path d="M745 64 L752.5 56.5 L760 64 L752.5 71.5 Z" fill="#6e6e6e"/><path d="M746.5 62.5 C744 66 746 68 746.5 68.5" />
<rect x="773.5" y="57" width="14" height="14" stroke-dasharray="1.5 1.2"/><path d="M780.5 54.5 V57"/>
<rect x="808" y="56" width="14" height="14" stroke-dasharray="1.5 1.2"/><path d="M808 56 L822 70"/>
<rect x="834.5" y="56" width="14" height="14" stroke-dasharray="1.5 1.2"/><path d="M848.5 56 V70 H834.5 Z" fill="#6e6e6e"/>
<rect x="862.5" y="56" width="14" height="14"/><rect x="865" y="58.5" width="9" height="9" fill="#5e5e5e" stroke-dasharray="1 1"/>
</g>
<path d="M899.5 56.5 V71.5 H914.5 Z" stroke="#dde0ea" stroke-width="1.2"/><path d="M903 67 L914 57" stroke="#dde0ea" stroke-width="2"/>
<path d="M927 65 C927 72 942 73 943 65 Z" stroke="#dde0ea" stroke-width="1.2"/><path d="M934 65 L943.5 56" stroke="#dde0ea" stroke-width="2"/>
</g></svg>
<div class="a" style="left:407px;top:154px;width:471.5px;height:441.5px;overflow:hidden;background-color:#e5e2e4;background-image:conic-gradient(#c1bec1 0 25%,transparent 0 50%,#c1bec1 0 75%,transparent 0);background-size:11.96px 11.96px"></div>
<div class="a" style="left:455px;top:476.5px;width:269px;height:119px;background-color:#e4e0b4;background-image:conic-gradient(#bcb898 0 25%,transparent 0 50%,#bcb898 0 75%,transparent 0);background-size:11.96px 11.96px;background-position:-48px -322.5px"></div>
<div class="a" style="left:397px;top:595.5px;width:603px;height:2px;background:#2a2a2a"></div>
<svg style="left:0;top:0" width="1000" height="597" viewBox="0 0 1000 597">
<defs>
<clipPath id="cv"><rect x="407" y="154" width="471.5" height="441.5"/></clipPath>
<pattern id="net" width="9.6" height="9.6" patternUnits="userSpaceOnUse" patternTransform="rotate(35)">
 <rect width="9.6" height="9.6" fill="#e2e0f0"/>
 <path d="M0 0 H9.6 M0 0 V9.6" stroke="#3e3e58" stroke-width="1.05"/>
</pattern>
<pattern id="net2" width="9.8" height="9.8" patternUnits="userSpaceOnUse" patternTransform="rotate(22)">
 <rect width="9.8" height="9.8" fill="#e2e0f0"/>
 <path d="M0 0 H9.8 M0 0 V9.8" stroke="#3e3e58" stroke-width="1.0"/>
</pattern>
<pattern id="netb" width="7.6" height="7.6" patternUnits="userSpaceOnUse" patternTransform="rotate(33)">
 <rect width="7.6" height="7.6" fill="#4a5f8e"/>
 <path d="M0 0 H7.6 M0 0 V7.6" stroke="#2c3a5c" stroke-width="0.95"/>
</pattern>
<filter id="blur2" x="-50%" y="-50%" width="200%" height="200%"><feGaussianBlur stdDeviation="1.3"/></filter>
<filter id="blur1"><feGaussianBlur stdDeviation="0.5"/></filter>
</defs>
<g clip-path="url(#cv)">
<linearGradient id="pk" x1="0" y1="0" x2="0" y2="1"><stop offset="0" stop-color="#ffd0c8" stop-opacity="0.12"/><stop offset="1" stop-color="#ffd0c8" stop-opacity="0"/></linearGradient><rect x="407" y="154" width="472" height="330" fill="url(#pk)"/>
<g filter="url(#blur2)" fill="#5a5a5a" opacity="0.3">
<rect x="408" y="149" width="25" height="19" rx="6"/><ellipse cx="424" cy="157" rx="6" ry="5"/>
<rect x="408" y="193" width="25" height="19" rx="6"/><ellipse cx="424" cy="201" rx="6" ry="5"/>
<rect x="408" y="230" width="25" height="19" rx="6"/><ellipse cx="424" cy="238" rx="6" ry="5"/>
<rect x="408" y="274" width="25" height="19" rx="6"/><ellipse cx="424" cy="282" rx="6" ry="5"/>
<rect x="408" y="316" width="25" height="19" rx="6"/><ellipse cx="424" cy="324" rx="6" ry="5"/>
<rect x="408" y="358" width="25" height="19" rx="6"/><ellipse cx="424" cy="366" rx="6" ry="5"/>
<rect x="408" y="402" width="25" height="19" rx="6"/><ellipse cx="424" cy="410" rx="6" ry="5"/>
<rect x="408" y="441" width="25" height="19" rx="6"/><ellipse cx="424" cy="449" rx="6" ry="5"/>
<rect x="408" y="483" width="25" height="19" rx="6"/><ellipse cx="424" cy="491" rx="6" ry="5"/>
<rect x="408" y="524" width="25" height="19" rx="6"/><ellipse cx="424" cy="532" rx="6" ry="5"/>
<rect x="408" y="564" width="25" height="19" rx="6"/><ellipse cx="424" cy="572" rx="6" ry="5"/>
</g>
<g fill="none" stroke="#8a8a70" stroke-width="0.8" opacity="0.35"><path d="M480 575 C490 540 520 520 560 525 C600 530 640 560 650 590 M500 520 C530 505 600 500 640 515 M560 525 C565 550 570 575 575 596 M600 540 C610 560 615 580 612 596"/></g>
</g>
<g stroke-linejoin="round" stroke-linecap="round">
<path d="M486 316 L487.5 297 C484 283 484 268 488 249 L492 244 L489 238 L497 239 L500 236 L505 238 L509 232 L514 237 L520 228.5 L526 235 L531 233 L536 233 L540 239 L546 242 L548.5 232 L546 226 L610 214 L612 222 L617.5 244 L625.5 234 L629 240 L639 233 L643 240 L652 237 L659 232 L662 240 L680 241 L706 243 L707 296 L690 298 L672 301 L668 307 L661 303 L654 309 L648 307 L641 313 L600 318 L545 320 Z" fill="url(#net)" stroke="#3a3a48" stroke-width="0.9"/>
<path d="M486 318 L487 298 C483 284 484 268 488.5 258 C492 250 499 246.5 510 245.5 C524 244.5 538 243 546 242.5 L556 270 L565 322 L486 322 Z" fill="url(#net2)" stroke="none"/><path d="M486 318 L487 298 C483 284 484 268 488.5 258 C492 250 499 246.5 510 245.5" fill="none" stroke="#2e2e3a" stroke-width="1.1"/>
<path d="M489 254 L490.5 246 L485.5 240 L494 240.5 L497 234 L503 238 L508 230.5 L513 236 L519 227.5 L524 235 L531 232 L536 234 L540 240 L546 243 C540 247 530 246 520 246.5 C508 247 498 250 489 254 Z" fill="#e7e5f3" stroke="#4a4a55" stroke-width="0.8"/>
<path d="M617.5 245 L625.5 234 L629 240 L638 233.5 L643 240 L652 237 L659 232 L662 240 L671 241.5 C662 245 650 247 635 248 C628 248 622 247 617.5 245 Z" fill="#e7e5f3" stroke="#4a4a55" stroke-width="0.8"/>
<path d="M641 313 L648 307 L654 309 L661 303 L668 307 L672 301 L690 298 C680 303 668 308 655 312 Z" fill="#e7e5f3" stroke="#4a4a55" stroke-width="0.8"/>
<path d="M580 318 C582 305 586 293 596 284 C603 279 612 282 618 290 C623 298 625 308 625 318 Z" fill="url(#netb)" stroke="#2a3450" stroke-width="0.6"/>
<path d="M544.5 241 L557.5 241 C567 268 575 295 579.5 330 L566.5 330 C562 300 554 270 544.5 241 Z" fill="#0c0b1c"/>
<path d="M614 243 L627 242 C633 265 638 290 640.5 318 L628 322 C625 295 621 268 614 243 Z" fill="#0c0b1c"/>
<path d="M545.5 220 C548 213 556 208 566 206 L598 202.5 C604 202.5 607 205 607.5 208.5 Z" fill="#e6e4f2" stroke="#555" stroke-width="0.8"/><path d="M548 215 C560 207 585 203.5 604 203.5 M552 212 C565 206 590 202 606 206" stroke="#666" stroke-width="0.6" fill="none"/>
<path d="M546 219.5 L606.5 207.5 C611 208 612 217 609.5 220 L548 232.5 C542.5 231.5 542 221.5 546 219.5 Z" fill="#0c0b1c"/>
<path d="M483 313 C500 314 525 317 545 319 L544 421 C542 428 538 433 530 433 L505 427 L481 400 C480 360 481 335 483 313 Z" fill="#0a0919" stroke="#333" stroke-width="0.7"/>
<path d="M545 317 L646 312.5 C655 325 663 345 667 365 C671 390 667 412 655 425 C640 440 615 445 590 445 C570 445 555 440 548 430 C545 424 544 421 544 415 Z" fill="#0a0919" stroke="#2a2a2a" stroke-width="0.8"/>
<path d="M544.5 323 C546 350 545 390 543 425" stroke="#e8e8ee" stroke-width="1.1" fill="none"/>
<path d="M701 243 C712 245 720 248 729 249.5 C740 247 750 245 761 246 C775 249 787 254 795.5 260 C799 268 799 284 794 293 C782 295 772 296 760 296 C748 296 738 297 729 297 C718 296 708 296 699 295.5 Z" fill="#0a0919" stroke="#333" stroke-width="0.7"/>
<path d="M794 261 C801 262 808 265 811 270 C815 276 813 285 808 289 C804 292 798 293 794 292 C797 282 797 270 794 261 Z" fill="#e4e2f2" stroke="#444" stroke-width="1"/>
<path d="M451.5 392 C454 386.5 464 386 472 391 C481 397 487 409 487.5 418 C487 424 477 425.5 468.5 423.5 C461 416 455 405 451.5 396 Z" fill="#d6c3a9" stroke="#4a4a4a" stroke-width="1.5"/>
<ellipse cx="495.5" cy="400.3" rx="14.3" ry="18.3" transform="rotate(-24 495.5 400.3)" fill="#d6c3a9" stroke="#4a4a4a" stroke-width="1.5"/>
<path d="M467.5 423.5 C475 421 484 418.5 491 417.5 C498 416.5 505 414.5 511 413.5 C516 418 520 425 522 432 C521.5 443 520 451 516.5 457 C508 458.5 500 457.5 494 455 C485 448 475 437 467.5 426 Z" fill="#e2e1f1" stroke="#4a4a4a" stroke-width="1.5"/>
<ellipse cx="530" cy="435.8" rx="12.3" ry="18" transform="rotate(33 530 435.8)" fill="#d6c3a9" stroke="#4a4a4a" stroke-width="1.5"/>
<g fill="#34425f" stroke="#1a2030" stroke-width="0.9">
<ellipse cx="505.8" cy="258.4" rx="3.6" ry="5.6" transform="rotate(30 505.8 258.4)"/>
<ellipse cx="518.8" cy="269.4" rx="2.2" ry="3.8" transform="rotate(15 518.8 269.4)"/>
<ellipse cx="525.3" cy="273.4" rx="2.8" ry="5" transform="rotate(15 525.3 273.4)"/>
<ellipse cx="503.7" cy="281.5" rx="3.2" ry="6"/>
<ellipse cx="520.2" cy="284.5" rx="2" ry="3.3" transform="rotate(10 520.2 284.5)"/>
<ellipse cx="639" cy="248.2" rx="4" ry="2.3"/>
<ellipse cx="649" cy="251.5" rx="2" ry="1.8"/>
<ellipse cx="663" cy="250" rx="5" ry="3" transform="rotate(-15 663 250)"/>
</g>
</g>
</svg>
<svg style="left:0;top:0" width="1000" height="597"><circle cx="1000" cy="453" r="25" fill="#3d3d3d" stroke="#d8d8d8" stroke-width="1.8"/><path d="M988.5 446.5 L982 453 L988.5 459.5" stroke="#d8d8d8" stroke-width="1.6" fill="none"/><rect x="994.5" y="437.5" width="10" height="31" rx="2" fill="#777" stroke="#d8d8d8" stroke-width="1.6"/></svg>
</body></html>
